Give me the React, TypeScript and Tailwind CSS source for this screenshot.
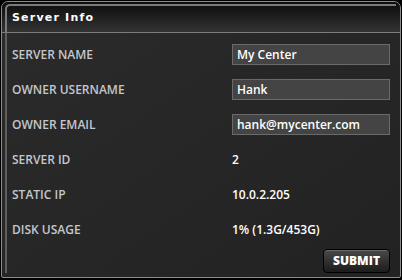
const rows: { label: string; value: string; input?: boolean }[] = [
  { label: "SERVER NAME", value: "My Center", input: true },
  { label: "OWNER USERNAME", value: "Hank", input: true },
  { label: "OWNER EMAIL", value: "hank@mycenter.com", input: true },
  { label: "SERVER ID", value: "2" },
  { label: "STATIC IP", value: "10.0.2.205" },
  { label: "DISK USAGE", value: "1% (1.3G/453G)" },
];

export default function App() {
  return (
    <div className="h-[280px] w-[402px] bg-black p-px" style={{ fontFamily: '"Open Sans", "Liberation Sans", sans-serif' }}>
      <div className="flex h-[277px] flex-col overflow-hidden rounded-t-[7px] rounded-b-[2px] border border-[#8c8c8c] bg-gradient-to-br from-[#2b2b2b] to-[#222]">
        <div className="h-[30px] shrink-0 bg-gradient-to-b from-[#0c0c0c] to-[#343434] pl-[3px] pt-[2px] pr-[4px]">
          <div className="flex h-[28px] items-center rounded-tl-[5px] border-l-2 border-t-2 border-[#7a7a7a] pl-[5px] pb-[1px]">
            <span
              className="text-[11px] font-bold tracking-[1.2px] text-white"
              style={{ fontFamily: '"DejaVu Sans", sans-serif' }}
            >
              Server Info
            </span>
          </div>
        </div>
        <div className="h-px shrink-0 bg-[#7d7d7d]" />
        <div className="flex min-h-0 flex-1 flex-col pl-[3px] pb-[4px]">
          <div className="flex flex-1 flex-col border-l-2 border-[#5e5e5e] pl-[5px] pt-[4px]">
            {rows.map((r) => (
              <div key={r.label} className="flex h-[35px] shrink-0 items-center">
                <span className="w-[220px] text-[12px] font-semibold text-[#c3c7ce]">{r.label}</span>
                {r.input ? (
                  <div className="flex h-[21px] w-[158px] items-center border border-[#6a6a6a] bg-[#444] pl-[4px] text-[12px] font-semibold text-white">
                    {r.value}
                  </div>
                ) : (
                  <span className="text-[12px] font-semibold text-white">{r.value}</span>
                )}
              </div>
            ))}
            <div className="mt-[2px] flex shrink-0 justify-end pr-[10px]">
              <button className="flex h-[24px] w-[67px] shrink-0 items-center justify-center rounded-[4px] border border-black bg-gradient-to-b from-[#4a4a4a] to-[#1c1c1c] text-[12px] font-extrabold text-white shadow-[inset_0_1px_0_#6a6a6a]">
                SUBMIT
              </button>
            </div>
          </div>
        </div>
      </div>
    </div>
  );
}
